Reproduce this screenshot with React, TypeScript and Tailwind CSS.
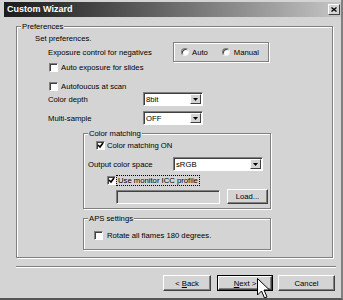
import { ReactNode } from 'react';

function Group({ label, className, children }: { label: string; className: string; children?: ReactNode }) {
  return (
    <div className={`relative border border-[#808080] shadow-[1px_1px_0_#fff,inset_1px_1px_0_#fff] ${className}`}>
      <span className="absolute -top-[5px] left-[4px] bg-[#d4d4d4] px-[1px] leading-[9px]">{label}</span>
      {children}
    </div>
  );
}

function Check({ checked = false }: { checked?: boolean }) {
  return (
    <span className="w-[9px] h-[9px] shrink-0 bg-white border border-t-[#808080] border-l-[#808080] border-b-white border-r-white shadow-[inset_1px_1px_0_#404040] flex items-center justify-center">
      {checked && (
        <svg width="7" height="7" viewBox="0 0 7 7">
          <path d="M1 3 L3 5 L6 1" fill="none" stroke="#000" strokeWidth="1.6" />
        </svg>
      )}
    </span>
  );
}

function Radio() {
  return (
    <span className="block w-[8px] h-[8px] shrink-0 rounded-full bg-white border border-t-[#808080] border-l-[#808080] border-b-[#eee] border-r-[#eee] shadow-[inset_1px_1px_0_#404040]" />
  );
}

function Select({ value, className }: { value: string; className: string }) {
  return (
    <div className={`h-[14px] bg-white border border-t-[#808080] border-l-[#808080] border-b-white border-r-white shadow-[inset_1px_1px_0_#404040] flex items-center pl-[2px] pr-[1px] ${className}`}>
      <span className="flex-1 leading-[9px]">{value}</span>
      <span className="w-[11px] h-[10px] bg-[#d4d4d4] border border-t-white border-l-white border-b-[#404040] border-r-[#404040] flex items-center justify-center">
        <svg width="5" height="3" viewBox="0 0 5 3">
          <path d="M0 0 H5 L2.5 3 Z" fill="#000" />
        </svg>
      </span>
    </div>
  );
}

function Button({ children, className, isDefault = false }: { children: ReactNode; className: string; isDefault?: boolean }) {
  return (
    <div className={`${isDefault ? 'border border-black' : ''} ${className}`}>
      <div className="w-full h-full bg-[#d4d4d4] border border-t-white border-l-white border-b-[#404040] border-r-[#404040] shadow-[inset_-1px_-1px_0_#808080] flex items-center justify-center leading-[9px]">
        {children}
      </div>
    </div>
  );
}

export default function App() {
  return (
    <div className="relative w-[343px] h-[300px] overflow-hidden bg-[#d4d4d4] text-black text-[7.7px] leading-[9px] font-['Liberation_Sans',Arial,sans-serif] border-r-2 border-r-[#808080] border-b-2 border-b-[#555]">
      {/* Title bar */}
      <div className="ml-[4px] mt-[2px] w-[337px] h-[15px] bg-gradient-to-r from-[#1c1c1c] to-[#c6c6c6] flex items-center justify-between pl-[3px] pr-[1px]">
        <span className="text-white font-bold text-[9px]">Custom Wizard</span>
        <span className="w-[12px] h-[11px] bg-[#d4d4d4] border border-t-white border-l-white border-b-[#404040] border-r-[#404040] flex items-center justify-center">
          <svg width="6" height="5" viewBox="0 0 6 5">
            <path d="M0.5 0.5 L5.5 4.5 M5.5 0.5 L0.5 4.5" stroke="#000" strokeWidth="1.3" />
          </svg>
        </span>
      </div>

      {/* Preferences */}
      <Group label="Preferences" className="ml-[16px] mt-[9px] w-[317px] h-[232px]">
        <div className="flex flex-col">
          <div className="ml-[18px] mt-[7px] h-[8px] leading-[10px]">Set preferences.</div>

          <div className="flex items-center h-[20px]">
            <span className="ml-[31px] w-[125px]">Exposure control for negatives</span>
            <div className="w-[96px] h-[20px] border border-[#808080] shadow-[1px_1px_0_#fff,inset_1px_1px_0_#fff] flex items-center">
              <span className="ml-[7px]"><Radio /></span>
              <span className="ml-[3px]">Auto</span>
              <span className="ml-[14px]"><Radio /></span>
              <span className="ml-[4px]">Manual</span>
            </div>
          </div>

          <div className="ml-[32px] mt-[1px] h-[9px] flex items-center gap-[3px]">
            <Check />
            <span>Auto exposure for slides</span>
          </div>

          <div className="ml-[32px] mt-[10px] h-[9px] flex items-center gap-[3px]">
            <Check />
            <span>Autofoucus at scan</span>
          </div>

          <div className="mt-[1px] flex items-center">
            <span className="ml-[31px] w-[95px]">Color depth</span>
            <Select value="8bit" className="w-[60px]" />
          </div>

          <div className="mt-[5px] flex items-center">
            <span className="ml-[31px] w-[95px]">Multi-sample</span>
            <Select value="OFF" className="w-[60px]" />
          </div>

          <Group label="Color matching" className="ml-[66px] mt-[8px] w-[188px] h-[76px]">
            <div className="flex flex-col">
              <div className="ml-[12px] mt-[7px] h-[9px] flex items-center gap-[2px]">
                <Check checked />
                <span>Color matching ON</span>
              </div>
              <div className="mt-[7px] flex items-center">
                <span className="ml-[4px] w-[85px]">Output color space</span>
                <Select value="sRGB" className="w-[90px]" />
              </div>
              <div className="ml-[23px] mt-[5px] h-[9px] flex items-center gap-[1px]">
                <Check checked />
                <span className="outline outline-1 outline-dotted outline-black px-[1px] leading-[9px]">Use monitor ICC profile</span>
              </div>
              <div className="ml-[32px] mt-[4px] flex items-center">
                <div className="w-[104px] h-[14px] bg-[#d4d4d4] border border-t-[#808080] border-l-[#808080] border-b-white border-r-white shadow-[inset_1px_1px_0_#404040]" />
                <Button className="ml-[7px] w-[41px] h-[15px]">Load...</Button>
              </div>
            </div>
          </Group>

          <Group label="APS settings" className="ml-[66px] mt-[9px] w-[188px] h-[32px]">
            <div className="ml-[10px] mt-[12px] h-[9px] flex items-center gap-[4px]">
              <Check />
              <span>Rotate all flames 180 degrees.</span>
            </div>
          </Group>
        </div>
      </Group>

      {/* Separator */}
      <div className="ml-[16px] mt-[8px] w-[320px] h-[2px] border-t border-t-[#808080] border-b border-b-white" />

      {/* Buttons */}
      <div className="mt-[7px] ml-[163px] flex">
        <Button className="w-[48px] h-[16px]">
          <span>&lt; <span className="underline">B</span>ack</span>
        </Button>
        <Button isDefault className="ml-[6px] w-[56px] h-[16px]">
          <span><span className="underline">N</span>ext &gt;</span>
        </Button>
        <Button className="ml-[5px] w-[57px] h-[16px]">Cancel</Button>
      </div>

      {/* Mouse pointer */}
      <svg className="absolute left-[257px] top-[278px]" width="14" height="22" viewBox="0 0 14 22">
        <path d="M0.5 0.5 L0.5 17 L4.5 13 L7.5 20 L10 19 L7 12 L12.5 12 Z" fill="#fff" stroke="#000" strokeWidth="1" strokeLinejoin="round" />
      </svg>
    </div>
  );
}
